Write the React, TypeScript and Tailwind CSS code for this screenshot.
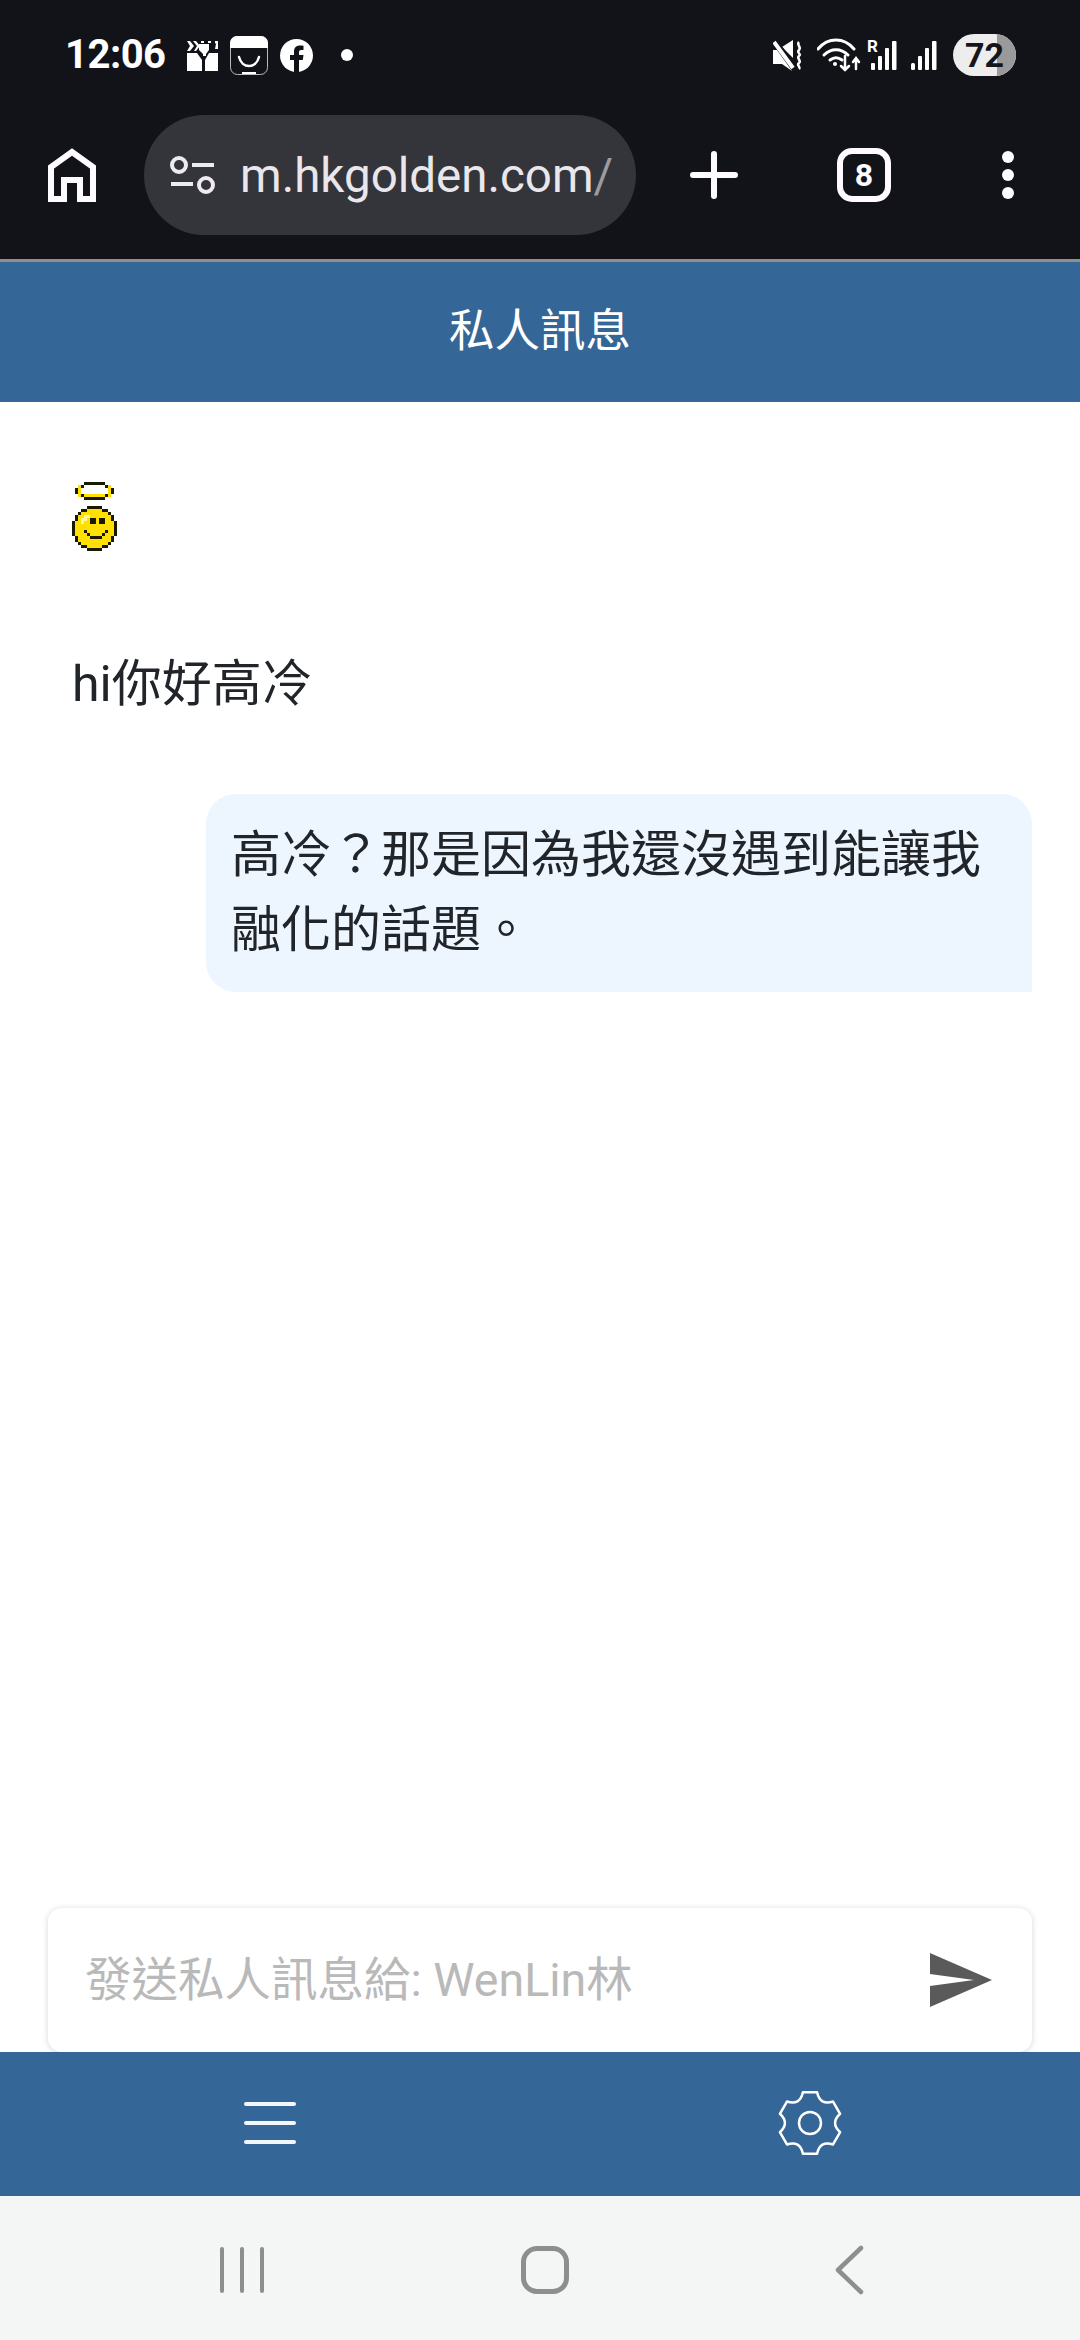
const FONT = "font-['Roboto','Noto_Sans_CJK_TC',sans-serif]";

const PIXELS = [
  "....KKKKKKK....",
  "..YKWWWWWWWKY..",
  ".KYWWWWWWWWWYK.",
  ".KYWWWWWWWWWYK.",
  "..YKYYYYYYYKY..",
  "....KKKKKKK....",
  "...............",
  "...............",
  ".....KKKKK.....",
  "...KKYYYYYKK...",
  "..KYYYYYYYYYK..",
  ".KYYLLYYYYYYYK.",
  ".KYLLYKKYKKYYK.",
  "KYYLYYKKYKKYYYK",
  "KYYYYYYYYYYYYYK",
  "KYYYYYYYYYYYYYK",
  "KYYYKYYYYYYKYYK",
  "KYYYYKYYYYKYYYK",
  ".KYYYYKKKKYYYK.",
  ".KYYYYYYYYYYYK.",
  "..KYYYYYYYYYK..",
  "...KKYYYYYKK...",
  ".....KKKKK.....",
];
const PIXEL_COLOR: Record<string, string> = { K: "#1a1a00", Y: "#ffe000", L: "#fff79a", W: "#ffffff" };

function Smiley() {
  return (
    <svg width="45" height="69" viewBox="0 0 15 23" className="block blur-[0.5px]" shapeRendering="crispEdges">
      {PIXELS.flatMap((row, y) =>
        row.split("").map((c, x) =>
          c === "." ? null : <rect key={`${x}-${y}`} x={x} y={y} width="1" height="1" fill={PIXEL_COLOR[c]} />
        )
      )}
    </svg>
  );
}

function gearPath() {
  const c = 33;
  const pt = (r: number, deg: number) => {
    const a = ((deg - 90) * Math.PI) / 180;
    return `${(c + r * Math.cos(a)).toFixed(2)} ${(c + r * Math.sin(a)).toFixed(2)}`;
  };
  let d = "";
  for (let k = 0; k < 6; k++) {
    const a = k * 60;
    d += `${k === 0 ? "M" : "L"}${pt(31.5, a - 13)} L${pt(31.5, a + 13)} `;
    d += `Q${pt(20, a + 30)} ${pt(31.5, a + 47)} `;
  }
  return d + "Z";
}

function StatusLeft() {
  return (
    <div className="flex items-center">
      <span className="ml-[65px] w-[99px] text-[40px] leading-none font-bold text-white font-['Roboto',sans-serif] tracking-[-0.5px]">12:06</span>
      <svg width="31" height="31" viewBox="0 0 31 31" className="ml-[23px]" fill="#fff">
        <path d="M0 1h3l4 5-4 5H0l3-5zM6 1h3l4 5-4 5H7l3-5z" />
        <path d="M14 1h3v2h-3zM21 1h3v2h-3zM28 1h3v8h-3l1-5-1-1zM12 4h10v6l-3 4v2h-3v-2l-4-4z" />
        <path d="M0 13h10l5 7v11H0zM31 13h-9l-4 7v11h13z" />
      </svg>
      <svg width="38" height="39" viewBox="0 0 38 39" className="ml-[12px]">
        <rect x="0.5" y="0.5" width="37" height="38" rx="7" fill="#121319" stroke="#bbb" />
        <path d="M7 0h24a7 7 0 0 1 7 7v5H0V7a7 7 0 0 1 7-7z" fill="#fff" />
        <path d="M9 21c3 12 17 12 20 0" fill="none" stroke="#fff" strokeWidth="2.5" strokeLinecap="round" />
        <path d="M12 38v-2h14v2z" fill="#fff" />
      </svg>
      <svg width="33" height="33" viewBox="0 0 33 33" className="ml-[12px]">
        <circle cx="16.5" cy="16.5" r="16.5" fill="#fff" />
        <path d="M14 33V21h-4v-5h4v-3.5C14 8.5 16.5 6.5 20 6.5c1.600 0 3 .2 3.500.3v4.200h-2.300c-1.900 0-2.200 1-2.200 2.300V16h4.500l-.7 5H19v12z" fill="#121319" />
      </svg>
      <span className="ml-[28px] w-[12px] h-[12px] rounded-full bg-white" />
    </div>
  );
}

function StatusRight() {
  return (
    <div className="flex items-center">
      <svg width="30" height="31" viewBox="0 0 30 31" fill="none">
        <path d="M9 7l11-7v18z" fill="#fff" />
        <path d="M0 10h4l15 21-10-7H0z" fill="#fff" />
        <path d="M1 2l19 26" stroke="#fff" strokeWidth="4" />
        <path d="M4.500 1l15.500 21" stroke="#121319" strokeWidth="1.200" />
        <path d="M26 2c-3 3 3 5 0 8s3 4 0 6 3 5 0 7 2 4 0 6" stroke="#fff" strokeWidth="2.500" />
      </svg>
      <svg width="44" height="34" viewBox="0 0 44 34" className="ml-[14px]" fill="none" stroke="#fff" strokeLinecap="round">
        <path d="M1 11C11 -1 27 -1 37 11" strokeWidth="3" />
        <path d="M7 17c7-7 17-7 24 0" strokeWidth="3" />
        <path d="M13 22c4-3 8-3 12 0" strokeWidth="3" />
        <circle cx="18" cy="26" r="2" fill="#fff" stroke="none" />
        <path d="M28 18v14M24 28l4 4 4-4" strokeWidth="2.500" />
        <path d="M39 31V20M36 24l3-4 3 4" strokeWidth="2.500" />
      </svg>
      <div className="ml-[6px] relative w-[31px] h-[31px]">
        <span className="absolute left-0 top-[-2px] text-[17px] leading-none font-bold text-white font-['Roboto',sans-serif]">R</span>
        <svg width="31" height="31" viewBox="0 0 31 31" fill="#fff" className="absolute inset-0">
          <rect x="4" y="23" width="4" height="7" rx="1" />
          <rect x="11" y="16" width="4" height="14" rx="1" />
          <rect x="18" y="8" width="4" height="22" rx="1" />
          <rect x="25" y="1" width="4.500" height="29" rx="1" />
        </svg>
      </div>
      <svg width="27" height="31" viewBox="0 0 27 31" fill="#fff" className="ml-[13px]">
        <rect x="0" y="23" width="4" height="7" rx="1.500" />
        <rect x="7" y="16" width="4" height="14" rx="1" />
        <rect x="14" y="8" width="4" height="22" rx="1" />
        <rect x="21" y="1" width="4.500" height="29" rx="1" />
      </svg>
      <div className="ml-[15px] mr-[64px] relative w-[63px] h-[42px] rounded-full overflow-hidden bg-[#ededed] flex items-center justify-center">
        <div className="absolute right-0 top-0 bottom-0 w-[19px] bg-[#9a9a9a]" />
        <span className="relative text-[34px] leading-none font-bold text-[#15161b] font-['Roboto',sans-serif]">72</span>
      </div>
    </div>
  );
}

function Toolbar() {
  return (
    <div className="h-[149px] pb-[19px] flex items-center">
      <svg width="48" height="54" viewBox="0 0 48 54" fill="none" stroke="#fdfbff" strokeWidth="6" className="ml-[48px]">
        <path d="M3 51V19L24 4l21 15v32H32V32H16v19z" />
      </svg>
      <div className="ml-[48px] w-[492px] h-[120px] rounded-full bg-[#34353a] flex items-center relative overflow-hidden">
        <svg width="46" height="38" viewBox="0 0 46 38" fill="none" stroke="#eeeaf2" strokeWidth="4" className="ml-[26px] shrink-0">
          <circle cx="9" cy="9" r="7" />
          <path d="M22 9h22M1 28h22" />
          <circle cx="36" cy="29" r="7" />
        </svg>
        <span className="ml-[24px] pt-[4px] text-[47.5px] leading-none text-[#e9e7ec] font-['Roboto',sans-serif] whitespace-nowrap">
          m.hkgolden.com<span className="text-[#9b9ba0]">/</span>
        </span>
      </div>
      <svg width="48" height="48" viewBox="0 0 48 48" stroke="#fdfbff" strokeWidth="6" strokeLinecap="round" className="ml-[54px]">
        <path d="M24 3v42M3 24h42" />
      </svg>
      <div className="ml-[99px] w-[54px] h-[54px] rounded-[15px] border-[6px] border-[#fdfbff] flex items-center justify-center">
        <span className="text-[32px] leading-none font-bold text-[#fdfbff] font-['Roboto',sans-serif]">8</span>
      </div>
      <div className="ml-[111px] flex flex-col gap-[6px]">
        <span className="w-[12px] h-[12px] rounded-full bg-[#fdfbff]" />
        <span className="w-[12px] h-[12px] rounded-full bg-[#fdfbff]" />
        <span className="w-[12px] h-[12px] rounded-full bg-[#fdfbff]" />
      </div>
    </div>
  );
}

export default function App() {
  return (
    <div className={`w-[1080px] h-[2340px] flex flex-col bg-white overflow-hidden ${FONT}`}>
      <div className="bg-[#121319] shrink-0">
        <div className="h-[110px] flex items-center justify-between">
          <StatusLeft />
          <StatusRight />
        </div>
        <Toolbar />
      </div>
      <div className="h-[3px] bg-[#8e8e8e] shrink-0" />
      <div className="h-[140px] bg-[#356698] flex items-center justify-center shrink-0">
        <span className="text-[45.5px] leading-none text-white">私人訊息</span>
      </div>

      <div className="flex-1 px-[48px] pt-[80px] min-h-0">
        <div className="ml-[24px]">
          <Smiley />
        </div>
        <p className="ml-[24px] mt-[96px] text-[50px] leading-[75px] text-[#212529]">hi你好高冷</p>
        <div className="mt-[72px] ml-[158px] rounded-[30px] rounded-br-none bg-[#edf5fe] px-[25px] py-[24px] text-[50px] leading-[75px] text-[#212529]">
          高冷？那是因為我還沒遇到能讓我融化的話題。
        </div>
      </div>

      <div className="mx-[48px] h-[144px] rounded-[14px] bg-white shadow-[0_1px_6px_rgba(0,0,0,0.17)] flex items-center justify-between pl-[37px] pr-[40px] shrink-0">
        <span className="text-[46.5px] leading-none text-[#b9b9b9]">發送私人訊息給: WenLin林</span>
        <svg width="62" height="54" viewBox="0 0 62 54" fill="#5a5a5a">
          <path d="M0 0l62 27L0 54V33l44-6L0 21z" />
        </svg>
      </div>

      <div className="h-[144px] bg-[#356698] grid grid-cols-2 shrink-0 relative">
        <div className="flex items-center justify-center pb-[2px]">
          <div className="flex flex-col gap-[15px]">
            <span className="block w-[52px] h-[4px] rounded-full bg-[#f2f7fb]" />
            <span className="block w-[52px] h-[4px] rounded-full bg-[#f2f7fb]" />
            <span className="block w-[52px] h-[4px] rounded-full bg-[#f2f7fb]" />
          </div>
        </div>
        <div className="flex items-center justify-center pb-[2px]">
          <svg width="66" height="66" viewBox="0 0 66 66" fill="none" stroke="#fff" strokeWidth="2.500" strokeLinejoin="round">
            <path d={gearPath()} />
            <circle cx="33" cy="33" r="11" />
          </svg>
        </div>
      </div>

      <div className="h-[144px] bg-[#f4f6f5] flex items-center relative shrink-0">
        <div className="ml-[220px] flex gap-[16px] h-[46px] mt-[3px]">
          <span className="w-[4px] h-full rounded-full bg-[#8e8e8e]" />
          <span className="w-[4px] h-full rounded-full bg-[#8e8e8e]" />
          <span className="w-[4px] h-full rounded-full bg-[#8e8e8e]" />
        </div>
        <div className="ml-[257px] w-[48px] h-[48px] rounded-[16px] border-[5px] border-[#8e8e8e] mt-[3px]" />
        <svg width="32" height="50" viewBox="0 0 32 50" fill="none" stroke="#8e8e8e" strokeWidth="4.500" strokeLinecap="round" strokeLinejoin="round" className="ml-[263px] mt-[3px]">
          <path d="M29 3L6 25l23 22" />
        </svg>
      </div>
    </div>
  );
}
